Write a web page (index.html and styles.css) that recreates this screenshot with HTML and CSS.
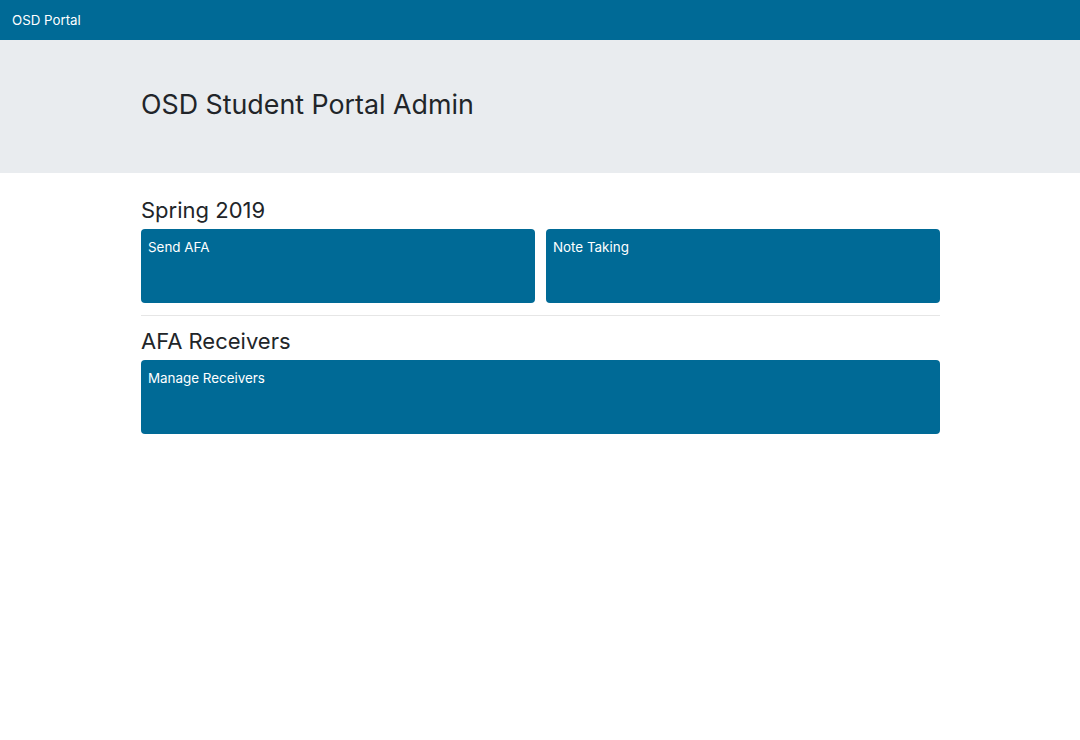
FILE: index.html
```html
<!DOCTYPE html>
<html>
<head>
<meta charset="utf-8">
<link rel="stylesheet" href="styles.css">
</head>
<body>
<nav class="navbar"><span class="brand">OSD Portal</span></nav>
<header class="jumbo">
  <div class="container"><h1 class="title">OSD Student Portal Admin</h1></div>
</header>
<main class="container">
  <section class="group">
    <h2 class="group-title">Spring 2019</h2>
    <div class="tiles two">
      <a class="tile">Send AFA</a>
      <a class="tile">Note Taking</a>
    </div>
  </section>
  <hr class="divider">
  <section class="group">
    <h2 class="group-title">AFA Receivers</h2>
    <div class="tiles">
      <a class="tile">Manage Receivers</a>
    </div>
  </section>
</main>
</body>
</html>
```

FILE: styles.css
```css
* { box-sizing: border-box; }
body {
  margin: 0;
  font-family: Inter, "Liberation Sans", Arial, sans-serif;
  color: #212529;
  background: #fff;
}
.navbar {
  height: 40px;
  background: #006a96;
  display: flex;
  align-items: center;
  padding: 0 12px;
}
.brand {
  color: #fff;
  font-size: 13.3px;
}
.jumbo {
  background: #e9ecef;
  height: 133px;
  padding-top: 48px;
}
.container {
  width: 800px;
  margin: 0 auto;
  padding-left: 1px;
}
.title {
  margin: 0;
  font-size: 26.8px;
  font-weight: 400;
  line-height: 32px;
}
.group-title {
  margin: 0 0 5px;
  font-size: 22px;
  font-weight: 400;
  line-height: 28px;
}
main.container { padding-top: 23px; }
.tiles {
  display: grid;
  grid-template-columns: 1fr;
  gap: 11px;
}
.tiles.two { grid-template-columns: 1fr 1fr; }
.tile {
  display: block;
  height: 74px;
  background: #006a96;
  border-radius: 4px;
  color: #fff;
  font-size: 13.4px;
  padding: 9px 7px;
  line-height: 18px;
}
.divider {
  border: 0;
  border-top: 1px solid #e6e6e6;
  margin: 12px 0 11px;
}
```
